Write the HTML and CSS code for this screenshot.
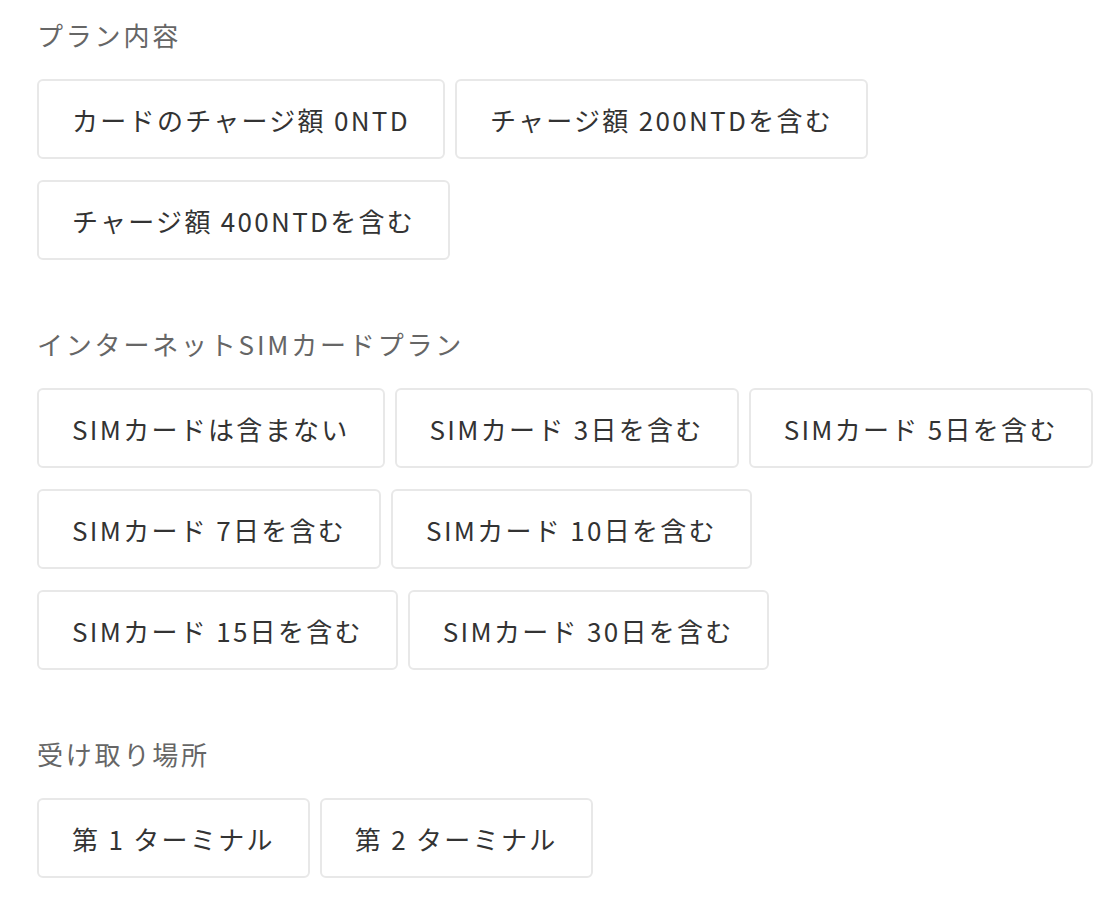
FILE: index.html
```html
<!DOCTYPE html>
<html lang="ja">
<head>
<meta charset="utf-8">
<link rel="stylesheet" href="styles.css">
</head>
<body>
<div class="page">
  <section class="group">
    <div class="label">プラン内容</div>
    <div class="options">
      <div class="opt">カードのチャージ額 0NTD</div>
      <div class="opt">チャージ額 200NTDを含む</div>
      <div class="opt">チャージ額 400NTDを含む</div>
    </div>
  </section>
  <section class="group">
    <div class="label">インターネットSIMカードプラン</div>
    <div class="options">
      <div class="opt">SIMカードは含まない</div>
      <div class="opt">SIMカード 3日を含む</div>
      <div class="opt">SIMカード 5日を含む</div>
      <div class="opt">SIMカード 7日を含む</div>
      <div class="opt">SIMカード 10日を含む</div>
      <div class="opt">SIMカード 15日を含む</div>
      <div class="opt">SIMカード 30日を含む</div>
    </div>
  </section>
  <section class="group">
    <div class="label">受け取り場所</div>
    <div class="options">
      <div class="opt">第 1 ターミナル</div>
      <div class="opt">第 2 ターミナル</div>
    </div>
  </section>
</div>
</body>
</html>
```
FILE: styles.css
```css
* { box-sizing: border-box; }
html, body { margin: 0; padding: 0; background: #fff; }
body {
  font-family: "Noto Sans CJK JP", "Noto Sans", sans-serif;
  color: #333;
}
.page {
  padding: 16px 4px 0 37px;
}
.group {
  margin-bottom: 65px;
}
.label {
  font-size: 26px;
  line-height: 38px;
  color: #666;
  letter-spacing: 2.8px;
  margin-bottom: 25px;
}
.options {
  display: flex;
  flex-wrap: wrap;
  column-gap: 10px;
  row-gap: 21px;
}
.opt {
  height: 80px;
  display: flex;
  align-items: center;
  padding: 0 33px;
  border: 2px solid #e8e8e8;
  border-radius: 6px;
  font-size: 26px;
  letter-spacing: 2.3px;
  color: #333;
  white-space: nowrap;
}
```
